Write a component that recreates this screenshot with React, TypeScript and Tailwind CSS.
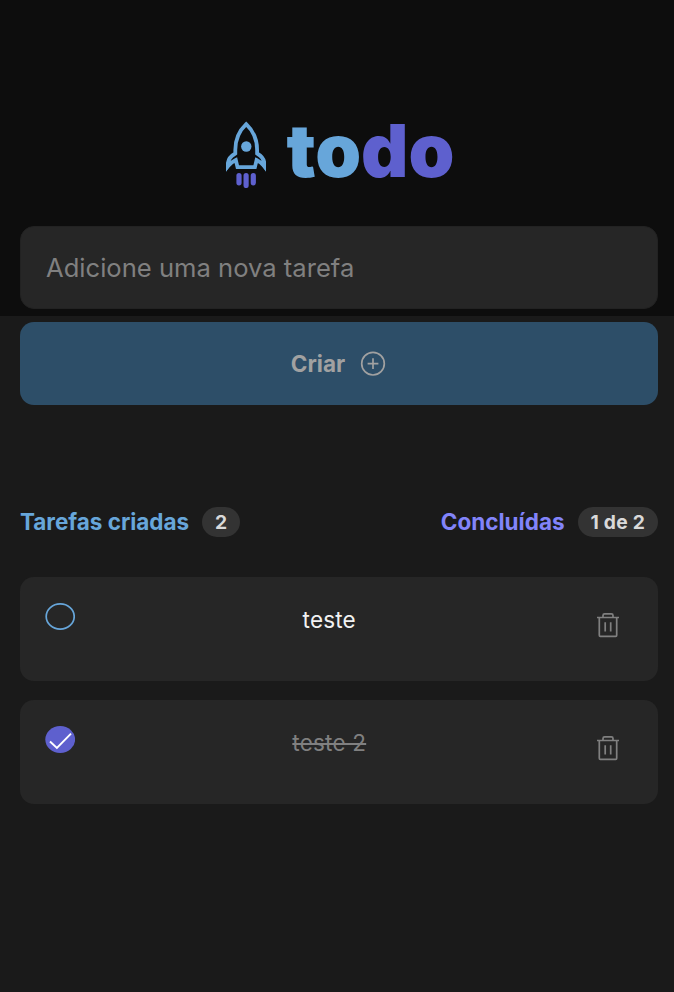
type Task = { id: number; title: string; done: boolean };

const tasks: Task[] = [
  { id: 1, title: "teste", done: false },
  { id: 2, title: "teste 2", done: true },
];

function Rocket() {
  return (
    <svg width="40" height="67" viewBox="0 0 40 67" fill="none">
      <path
        d="M20.200 3.200C13 10 9.300 18 9.300 29v3.500C4.800 35 1.800 38 1.800 43.500v1.800C4.500 42 7 40.300 9.800 39l1.700 7.200h17.400L30.600 39C33.400 40.300 35.700 42 38.400 45.300v-1.800C38.400 38 35.600 35 31.100 32.500V29C31.100 18 27.400 10 20.200 3.200Z"
        stroke="#67a6da"
        strokeWidth="3.800"
      />
      <path d="M0 43v7.700l4-5.500ZM40 43v7.700l-4-5.500Z" fill="#67a6da" />
      <circle cx="20.300" cy="25.500" r="5.200" fill="#67a6da" />
      <path d="M13 54.500v7.300M20.100 54.500v10M27.300 54.500v7.300" stroke="#5e60ce" strokeWidth="5.200" strokeLinecap="round" />
    </svg>
  );
}

function PlusCircle() {
  return (
    <svg width="26" height="26" viewBox="0 0 26 26" fill="none" stroke="#a1a1a1" strokeWidth="1.7">
      <circle cx="13" cy="12.700" r="11.300" />
      <path d="M13 7.300v10.800M7.600 12.700h10.800" />
    </svg>
  );
}

function Trash() {
  return (
    <svg width="22" height="25" viewBox="0 0 22 25" fill="none" stroke="#808080" strokeWidth="1.7">
      <path d="M0 4.500h22M2.300 4.500v17.800q0 1 1 1h15.400q1 0 1-1V4.500M6 4.500v-2q0-1.600 1.600-1.600h6.800Q16 .9 16 2.500v2M8.200 9.200v9.400M13.700 9.200v9.400" />
    </svg>
  );
}

function Check({ done }: { done: boolean }) {
  return done ? (
    <svg width="30" height="27" viewBox="0 0 30 27" fill="none">
      <ellipse cx="15.200" cy="13.500" rx="14.900" ry="13.500" fill="#5e60ce" />
      <path d="m5 15.500 6.900 6.500L26 7.600" stroke="white" strokeWidth="1.9" />
    </svg>
  ) : (
    <svg width="30" height="27" viewBox="0 0 30 27" fill="none">
      <ellipse cx="15.200" cy="13.500" rx="14" ry="12.600" stroke="#67a6da" strokeWidth="1.7" />
    </svg>
  );
}

export default function App() {
  return (
    <div className="min-h-[992px] bg-[#1a1a1a] font-['Inter',sans-serif]">
      <header className="flex h-[316px] justify-center bg-[#0d0d0d] pt-[121px] pl-[6.500px]">
        <div className="flex h-[67px] gap-[20.500px]">
          <Rocket />
          <h1 className="flex text-[73.500px] leading-[59px] font-black">
            <span className="text-[#67a6da]">to</span>
            <span className="text-[#5e60ce]">do</span>
          </h1>
        </div>
      </header>
      <main className="-mt-[90px] pr-4 pl-5">
        <form className="flex flex-col gap-[13px]">
          <input
            className="h-[83px] w-full rounded-[14px] border border-[#222222] bg-[#262626] px-[25px] text-[25.600px] text-white outline-none placeholder:text-[#808080]"
            placeholder="Adicione uma nova tarefa"
          />
          <button
            type="button"
            className="flex h-[83px] w-full items-center justify-center gap-[15px] rounded-[14px] bg-[#2d4e68] pr-px text-[22.500px] font-bold text-[#a1a1a1]"
          >
            Criar
            <PlusCircle />
          </button>
        </form>
        <div className="mt-[102px] flex h-[30px] items-center justify-between text-[22.500px] font-bold">
          <div className="flex items-center gap-[13px] text-[#67a6da]">
            <span className="tracking-[-0.030px]">Tarefas criadas</span>
            <span className="flex h-[30px] items-center rounded-full bg-[#333333] px-[13px] text-[19.300px] text-[#d9d9d9]">2</span>
          </div>
          <div className="flex items-center gap-[13px] text-[#8284fa]">
            Concluídas
            <span className="flex h-[30px] items-center rounded-full bg-[#333333] px-[13px] text-[19.300px] tracking-[0.200px] text-[#d9d9d9]">1 de 2</span>
          </div>
        </div>
        <ul className="mt-10 flex flex-col gap-[19px]">
          {tasks.map((task) => (
            <li key={task.id} className="flex h-[104px] items-start rounded-[14px] bg-[#262626] px-[25px] pt-[25.500px]">
              <Check done={task.done} />
              <p
                className={
                  task.done
                    ? "flex-1 pr-[13px] text-center text-[22.500px] leading-[34px] tracking-[0.200px] text-[#808080] line-through"
                    : "flex-1 pr-[13px] text-center text-[22.500px] leading-[34px] tracking-[0.200px] text-[#f2f2f2]"
                }
              >
                {task.title}
              </p>
              <button type="button" aria-label="Excluir tarefa" className="mt-[10px] mr-[14.500px]">
                <Trash />
              </button>
            </li>
          ))}
        </ul>
      </main>
    </div>
  );
}
